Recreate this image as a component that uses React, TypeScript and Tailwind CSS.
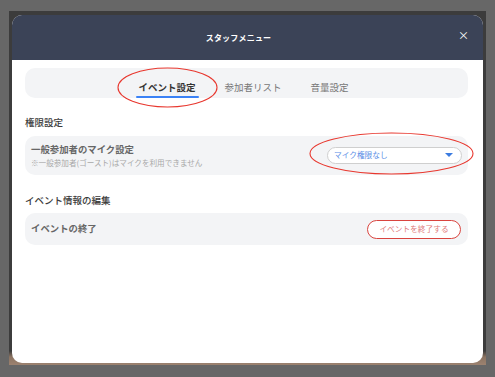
import React, { useState } from 'react';

const tabs = ['イベント設定', '参加者リスト', '音量設定'];

export default function App() {
  const [tab, setTab] = useState(0);

  return (
    <div
      className="relative w-[495px] h-[377px] bg-[#676767] pt-[11px] pl-[9px]"
      style={{ fontFamily: '"Noto Sans CJK JP", "Noto Sans", sans-serif' }}
    >
      {/* 外枠 */}
      <div className="w-[477px] h-[354px] bg-[linear-gradient(to_bottom,#3c3c3c_0,#3c3c3c_340px,#8c7462_346px,#9c8270_354px)] pt-[4px] pl-[3px]">
        {/* モーダル */}
        <div className="w-[471px] h-[348px] bg-white rounded-[10px] overflow-hidden flex flex-col">
          {/* ヘッダー */}
          <div className="h-[45px] bg-[#3b4357] flex items-center relative">
            <div className="w-full text-center pr-[18px] text-white text-[8px] font-bold tracking-[0.2px]">
              スタッフメニュー
            </div>
            <button className="absolute right-[14px] top-[15px] text-white text-[11px] leading-none">×</button>
          </div>

          <div className="pl-[13px] pr-[15px] pt-[8px]">
            {/* タブ */}
            <div className="h-[30px] bg-[#f3f4f6] rounded-[10px] flex justify-center gap-[29px] pr-[6px]">
              {tabs.map((t, i) => (
                <button
                  key={t}
                  onClick={() => setTab(i)}
                  className={
                    'relative h-full flex items-center pt-[9px] text-[9.5px] leading-none ' +
                    (tab === i ? 'text-[#333] font-semibold' : 'text-[#777]')
                  }
                >
                  {t}
                  {tab === i && (
                    <span className="absolute left-[-2px] right-[-4px] bottom-0 h-[2px] bg-[#3b82f6] rounded-full" />
                  )}
                </button>
              ))}
            </div>

            {/* 権限設定 */}
            <div className="mt-[20px] text-[9.5px] leading-none text-[#3a3a3a] font-medium">権限設定</div>
            <div className="mt-[8px] h-[39px] bg-[#f3f4f6] rounded-[10px] flex items-center justify-between pl-[6px] pr-[6px]">
              <div className="pt-[1px]">
                <div className="text-[9.4px] leading-none text-[#666] font-semibold">一般参加者のマイク設定</div>
                <div className="mt-[5px] text-[7.6px] leading-none text-[#a8a8a8]">※一般参加者(ゴースト)はマイクを利用できません</div>
              </div>
              <div className="w-[135px] h-[17px] bg-white border border-[#cfcfcf] rounded-full flex items-center justify-between pl-[6px] pr-[8px]">
                <span className="text-[7.7px] leading-none text-[#5b8ee6]">マイク権限なし</span>
                <span className="w-0 h-0 border-l-[4px] border-r-[4px] border-t-[4px] border-l-transparent border-r-transparent border-t-[#3b7be0]" />
              </div>
            </div>

            {/* イベント情報の編集 */}
            <div className="mt-[21px] text-[9.5px] leading-none text-[#3a3a3a] font-medium">イベント情報の編集</div>
            <div className="mt-[8px] h-[32px] bg-[#f3f4f6] rounded-[10px] flex items-center justify-between pl-[6px] pr-[7px]">
              <div className="text-[9.4px] leading-none text-[#666] font-semibold">イベントの終了</div>
              <button className="w-[94px] h-[19px] bg-white border-[1.5px] border-[#d9443f] rounded-full flex items-center justify-center text-[7.7px] leading-none text-[#e07a7a]">
                イベントを終了する
              </button>
            </div>
          </div>
        </div>
      </div>

      {/* 注釈の赤丸 */}
      <svg className="absolute left-0 top-0 pointer-events-none" width="495" height="377" viewBox="0 0 495 377">
        <ellipse cx="167.5" cy="87.5" rx="49.5" ry="19.5" fill="none" stroke="#e8372e" strokeWidth="1.1" />
        <ellipse cx="391.5" cy="153.5" rx="81.5" ry="20.5" fill="none" stroke="#e8372e" strokeWidth="1.1" />
      </svg>
    </div>
  );
}
